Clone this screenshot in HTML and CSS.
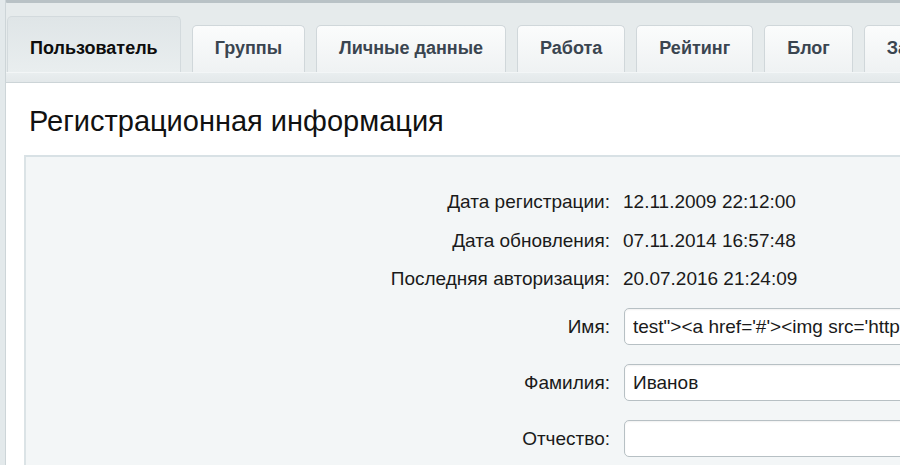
FILE: index.html
```html
<!DOCTYPE html>
<html lang="ru">
<head>
<meta charset="utf-8">
<title>Пользователь</title>
<link rel="stylesheet" href="styles.css">
</head>
<body>
<div class="frame">
  <div class="topbar"></div>
  <div class="tabs">
    <div class="tab active">Пользователь</div>
    <div class="tab">Группы</div>
    <div class="tab">Личные данные</div>
    <div class="tab">Работа</div>
    <div class="tab">Рейтинг</div>
    <div class="tab">Блог</div>
    <div class="tab">Заметки</div>
  </div>
  <div class="strip"></div>
  <div class="content">
    <h1 class="title">Регистрационная информация</h1>
    <div class="box">
      <div class="row text">
        <div class="label">Дата регистрации:</div>
        <div class="value">12.11.2009 22:12:00</div>
      </div>
      <div class="row text">
        <div class="label">Дата обновления:</div>
        <div class="value">07.11.2014 16:57:48</div>
      </div>
      <div class="row text">
        <div class="label">Последняя авторизация:</div>
        <div class="value">20.07.2016 21:24:09</div>
      </div>
      <div class="row field first">
        <div class="label">Имя:</div>
        <input class="input" type="text" value="test&quot;&gt;&lt;a href='#'&gt;&lt;img src='http://example/'&gt;">
      </div>
      <div class="row field">
        <div class="label">Фамилия:</div>
        <input class="input" type="text" value="Иванов">
      </div>
      <div class="row field">
        <div class="label">Отчество:</div>
        <input class="input" type="text" value="">
      </div>
    </div>
  </div>
</div>
</body>
</html>
```

FILE: styles.css
```css
html, body {
  margin: 0;
  padding: 0;
}
body {
  width: 900px;
  height: 465px;
  overflow: hidden;
  background: #e3e9eb;
  font-family: "Liberation Sans", Arial, "Helvetica Neue", sans-serif;
  color: #1d1d1d;
}
.frame {
  margin-left: 5px;
  border-left: 1px solid #cdd5d8;
  background: #e6ebec;
  height: 465px;
  display: flex;
  flex-direction: column;
  overflow: hidden;
}
.topbar {
  height: 3px;
  flex-shrink: 0;
  background: #b9c2c6;
  border-bottom-left-radius: 4px;
  margin-left: -1px;
}
.tabs {
  display: flex;
  flex-wrap: nowrap;
  align-items: flex-end;
  gap: 11px;
  padding-left: 1px;
  margin-top: 13px;
  height: 56px;
  flex-shrink: 0;
}
.tab {
  flex-shrink: 0;
  box-sizing: border-box;
  height: 47px;
  display: flex;
  align-items: flex-end;
  padding: 0 22px 14px;
  line-height: 20px;
  font-size: 18px;
  font-weight: bold;
  color: #3a4550;
  white-space: nowrap;
  border: 1px solid #d0d7da;
  border-bottom: none;
  border-radius: 5px 5px 0 0;
  background: linear-gradient(#fbfcfc, #eff2f3);
}
.tab.active {
  height: 56px;
  color: #0d0d0d;
  border-color: #d3dadd;
  background: linear-gradient(#dfe5e7, #e9eeef);
}
.strip {
  flex-shrink: 0;
  background: linear-gradient(#e9eeef, #e3e8ea);
  border-top: 1px solid #f3f6f7;
  border-bottom: 1px solid #ccd4d7;
  box-sizing: border-box;
  height: 11px;
}
.content {
  flex: 1;
  background: #ffffff;
  padding: 21px 0 0 18px;
}
.title {
  margin: 0 0 17px 0;
  padding-left: 5px;
  font-size: 29px;
  line-height: 34px;
  font-weight: normal;
  color: #111;
  white-space: nowrap;
}
.box {
  height: 400px;
  background: #f3f6f7;
  border-top: 2px solid #d8e1e5;
  border-left: 2px solid #dbe3e6;
  padding-top: 26px;
}
.row {
  display: flex;
  align-items: center;
  gap: 13px;
  font-size: 19px;
}
.row.text {
  height: 38.5px;
}
.row.field {
  height: 37px;
  margin-top: 19px;
}
.row.field.first {
  margin-top: 9.5px;
}
.label {
  width: 584px;
  flex-shrink: 0;
  text-align: right;
  color: #1a1a1a;
  white-space: nowrap;
}
.value {
  white-space: nowrap;
  color: #1a1a1a;
}
.input {
  flex-shrink: 0;
  box-sizing: border-box;
  width: 420px;
  height: 37px;
  margin: 0 0 0 1px;
  padding: 0 8px;
  border: 1px solid #b7c0c4;
  border-radius: 5px;
  background: #ffffff;
  box-shadow: inset 0 1px 2px rgba(0, 0, 0, 0.06);
  font-family: "Liberation Sans", Arial, "Helvetica Neue", sans-serif;
  font-size: 19px;
  color: #1a1a1a;
  outline: none;
}
```
